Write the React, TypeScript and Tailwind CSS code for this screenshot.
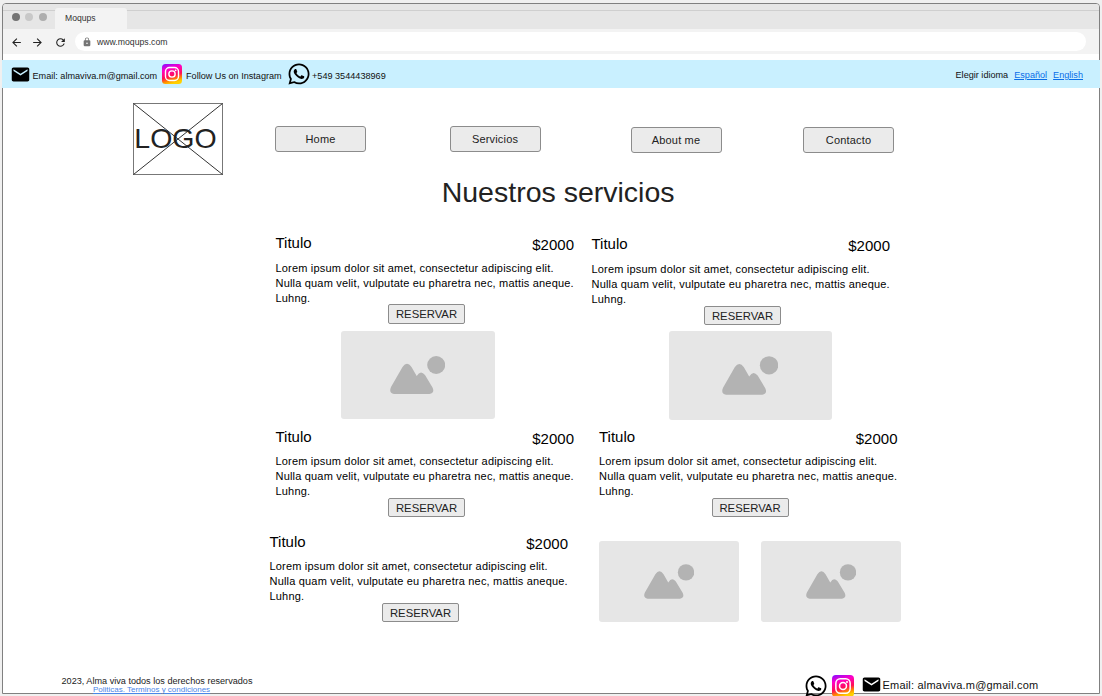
import React from "react";
import { MdArrowBack, MdArrowForward, MdRefresh, MdLock, MdEmail } from "react-icons/md";
import { FaWhatsapp } from "react-icons/fa";

function Instagram({ id, className }: { id: string; className: string }) {
  return (
    <svg viewBox="0 0 40 40" className={className}>
      <defs>
        <linearGradient id={id} x1="0.1" y1="0" x2="0.4" y2="1">
          <stop offset="0" stopColor="#8a0cff" />
          <stop offset="0.3" stopColor="#ff00c8" />
          <stop offset="0.65" stopColor="#ff0f55" />
          <stop offset="0.85" stopColor="#ff8a00" />
          <stop offset="1" stopColor="#ffd000" />
        </linearGradient>
      </defs>
      <rect width="40" height="40" rx="7" fill={`url(#${id})`} />
      <rect x="7" y="7" width="26" height="26" rx="8" fill="none" stroke="#fff" strokeWidth="2.8" />
      <circle cx="20" cy="20" r="6.3" fill="none" stroke="#fff" strokeWidth="2.8" />
      <circle cx="27.3" cy="12.7" r="1.8" fill="#fff" />
    </svg>
  );
}

function Placeholder({ className, iconClass }: { className: string; iconClass: string }) {
  return (
    <div className={`shrink-0 rounded-[3px] bg-[#e6e6e6] ${className}`}>
      <svg viewBox="0 0 55 38" className={iconClass} fill="#b3b3b3">
        <circle cx="46.2" cy="9" r="9" />
        <path d="M1 31 L12.5 11 Q17 4.5 21.5 11 L26.7 20 Q30.5 13.5 35 19 L42.5 31.5 Q45 37 39.5 38 L4 38 Q-1.5 37 1 31 Z" />
      </svg>
    </div>
  );
}

function NavButton({ label, className }: { label: string; className: string }) {
  return (
    <button
      className={`h-[26px] w-[91px] shrink-0 rounded-[3px] border border-[#8c8c8c] bg-[#ebebeb] text-center text-[11px] leading-[24px] tracking-[0.18px] text-[#222] ${className}`}
    >
      {label}
    </button>
  );
}

function ServiceCard({ className, headClass }: { className: string; headClass: string }) {
  return (
    <article className={`w-[304px] shrink-0 text-black ${className}`}>
      <div className={`flex h-[27px] w-[298.5px] items-start justify-between text-[15px] leading-[18px] ${headClass}`}>
        <h2>Titulo</h2>
        <span className="mt-[2px]">$2000</span>
      </div>
      <p className="text-[11px] leading-[14.8px] tracking-[0.185px]">
        Lorem ipsum dolor sit amet, consectetur adipiscing elit.
        <br />
        Nulla quam velit, vulputate eu pharetra nec, mattis aneque.
        <br />
        Luhng.
      </p>
      <button className="-mt-px ml-[112.5px] block h-[19.5px] w-[77px] rounded-[2px] border border-[#8c8c8c] bg-[#ebebeb] text-[11.3px] leading-[18px] text-[#222]">
        RESERVAR
      </button>
    </article>
  );
}

export default function App() {
  return (
    <div className="h-[696px] w-[1102px] overflow-hidden bg-[#f0f0f0] pt-[3px] pl-[2px] font-['Liberation_Sans',Arial,sans-serif]">
      <div className="flex h-[691px] w-[1098px] flex-col rounded-t-[4px] border border-[#808080] bg-white">
        <div className="h-[6px] shrink-0 rounded-t-[3px] bg-[#e6e6e6]" />
        <div className="flex h-[19px] shrink-0 border-t border-[#cfcfcf] bg-[#e6e6e6]">
          <div className="mt-[1px] ml-[8.5px] flex gap-[5.5px]">
            <span className="mt-[1px] size-2 rounded-full bg-[#737373]" />
            <span className="mt-[1px] size-2 rounded-full bg-[#c8c8c8]" />
            <span className="mt-[1px] size-2 rounded-full bg-[#adadad]" />
          </div>
          <div className="-mt-[3px] ml-[8.5px] h-[21px] w-[72px] rounded-t-[3px] bg-[#f3f3f3] pl-[10px] text-[8.6px] leading-[21px] text-[#333]">
            Moqups
          </div>
        </div>
        <div className="flex h-[25px] shrink-0 items-center bg-[#f3f3f3] text-[#222]">
          <MdArrowBack className="mt-px ml-[7px] size-[13px]" />
          <MdArrowForward className="mt-px ml-[8px] size-[13px]" />
          <MdRefresh className="mt-px ml-[9.5px] size-[13px]" />
          <div className="ml-[8px] flex h-[19px] w-[1011px] items-center rounded-full bg-white pl-[7px]">
            <MdLock className="size-[10px] text-[#757575]" />
            <span className="ml-[5.5px] text-[8.7px] leading-[18px] text-[#333]">www.moqups.com</span>
          </div>
        </div>
        <div className="-mx-px mt-[6.4px] flex h-7 shrink-0 items-center bg-[#c9f0ff] text-[9.12px] text-[#111]">
          <MdEmail className="mt-px ml-[8px] size-[21px] text-black" />
          <span className="ml-[1.5px] w-[129.5px] pt-[4px] whitespace-nowrap">Email: almaviva.m@gmail.com</span>
          <Instagram id="ig-top" className="size-5" />
          <span className="ml-[4px] w-[101px] pt-[4px] whitespace-nowrap">Follow Us on Instagram</span>
          <FaWhatsapp className="-mt-px size-[24px] text-black" />
          <span className="ml-px pt-[4px]">+549 3544438969</span>
          <div className="mr-[17px] ml-auto flex gap-[6px] pt-[2px]">
            <span>Elegir idioma</span>
            <a className="text-[#0a6ee8] underline">Español</a>
            <a className="text-[#0a6ee8] underline">English</a>
          </div>
        </div>
        <header className="flex h-[87px] shrink-0 items-start pt-[14.6px] pl-[130px]">
          <div className="grid h-[72px] w-[90px] shrink-0 place-items-center">
            <svg viewBox="0 0 90 72" className="col-start-1 row-start-1 h-[72px] w-[90px]">
              <rect x="0.5" y="0.5" width="89" height="71" fill="none" stroke="#777" />
              <path d="M.5 .5L89.5 71.5M89.5 .5L.5 71.5" stroke="#333" />
            </svg>
            <span className="col-start-1 row-start-1 mr-[5px] mb-[2px] text-[28.5px] leading-8 text-[#222]">LOGO</span>
          </div>
          <NavButton label="Home" className="mt-[23px] ml-[52px]" />
          <NavButton label="Servicios" className="mt-[23px] ml-[83.5px]" />
          <NavButton label="About me" className="mt-[24px] ml-[90px]" />
          <NavButton label="Contacto" className="mt-[24px] ml-[81.5px]" />
        </header>
        <h1 className="ml-[438.7px] h-[58.6px] shrink-0 text-[28.5px] leading-[35px] text-[#222]">Nuestros servicios</h1>
        <main className="shrink-0">
          <div className="flex pl-[272.5px]">
            <ServiceCard className="" headClass="" />
            <ServiceCard className="ml-[12px] pt-[1.5px]" headClass="" />
          </div>
          <div className="mt-[5.6px] flex h-[96.4px] pl-[338px]">
            <Placeholder className="h-[88px] w-[154px] pt-[25px] pl-[49px]" iconClass="h-[38px] w-[55px]" />
            <Placeholder className="ml-[174px] h-[89.5px] w-[162.5px] pt-[25.5px] pl-[53px]" iconClass="h-[39px] w-[56px]" />
          </div>
          <div className="flex pl-[272.5px]">
            <ServiceCard className="" headClass="pt-px" />
            <ServiceCard className="ml-[19.5px]" headClass="pt-px" />
          </div>
          <div className="mt-[15px] flex pl-[266.5px]">
            <ServiceCard className="" headClass="pt-[0.5px]" />
            <Placeholder className="mt-[9px] ml-[25.5px] h-[80.5px] w-[140px] pt-[23px] pl-[45px]" iconClass="h-[35px] w-[50px]" />
            <Placeholder className="mt-[9px] ml-[22px] h-[80.5px] w-[140px] pt-[23px] pl-[45px]" iconClass="h-[35px] w-[50px]" />
          </div>
        </main>
        <footer className="flex h-6 shrink-0 items-start pt-[50.5px] pl-[58px]">
          <div className="w-[192px] shrink-0 pt-[2px] text-center text-[9.12px] leading-[12px] text-[#222]">
            <p className="whitespace-nowrap">2023, Alma viva todos los derechos reservados</p>
            <a className="mt-[-2px] block pr-[11px] text-[8px] leading-[10px] text-[#4a86e8] underline">
              Politicas. Terminos y condiciones
            </a>
          </div>
          <FaWhatsapp className="mt-px ml-[551px] size-[24px] shrink-0 text-black" />
          <Instagram id="ig-bottom" className="mt-[2px] ml-[4px] size-[22px] shrink-0" />
          <MdEmail className="mt-px ml-[6.5px] size-[21px] shrink-0 text-black" />
          <span className="ml-[1px] pt-[2px] text-[11px] leading-[20px] tracking-[0.2px] whitespace-nowrap text-[#111]">
            Email: almaviva.m@gmail.com
          </span>
        </footer>
      </div>
    </div>
  );
}
